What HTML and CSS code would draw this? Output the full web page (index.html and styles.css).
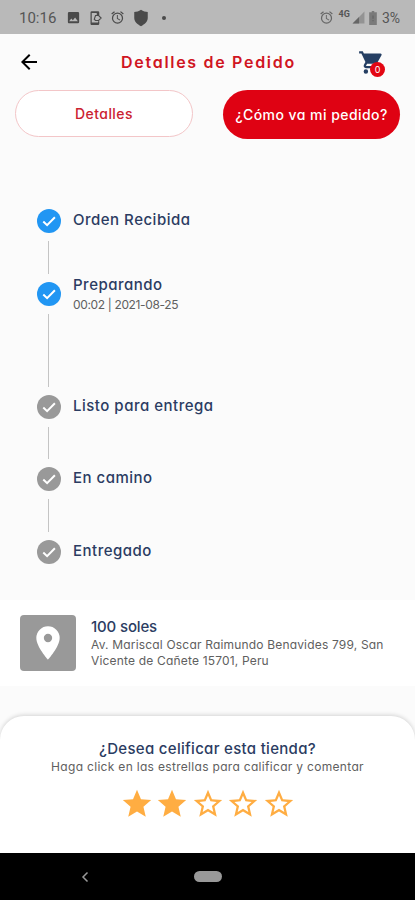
FILE: index.html
```html
<!DOCTYPE html>
<html lang="es">
<head>
  <meta charset="UTF-8" />
  <meta name="viewport" content="width=device-width, initial-scale=1.0" />
  <title>Detalles de Pedido</title>
  <link rel="stylesheet" href="styles.css">
</head>
<body>
  <svg class="sprite">
    <symbol id="alarm" viewBox="0 0 24 24">
      <path d="M22 5.7l-4.6-3.9-1.3 1.5 4.6 3.9L22 5.7zM7.9 3.4L6.6 1.9 2 5.7l1.3 1.5 4.6-3.8zM12.5 8H11v6l4.8 2.9.7-1.2-4-2.4V8zM12 4a9 9 0 1 0 0 18 9 9 0 0 0 0-18zm0 16a7 7 0 1 1 0-14 7 7 0 0 1 0 14z"/>
    </symbol>
    <symbol id="check" viewBox="0 0 24 24">
      <path d="M6.3 12.5l3.8 3.7 7.8-8" fill="none" stroke="#fff" stroke-width="2"/>
    </symbol>
    <symbol id="star" viewBox="0 0 24 24">
      <path d="M12 17.27L18.18 21l-1.64-7.03L22 9.24l-7.19-.61L12 2 9.19 8.63 2 9.24l5.46 4.73L5.82 21z"/>
    </symbol>
    <symbol id="star-outline" viewBox="0 0 24 24">
      <path d="M22 9.24l-7.19-.62L12 2 9.19 8.63 2 9.24l5.46 4.73L5.82 21 12 17.27 18.18 21l-1.63-7.03L22 9.24zM12 15.4l-3.76 2.27 1-4.28-3.32-2.88 4.38-.38L12 6.1l1.71 4.04 4.38.38-3.32 2.88 1 4.28L12 15.4z"/>
    </symbol>
  </svg>

  <div class="status-bar">
    <span class="clock">10:16</span>
    <div class="status-left">
      <svg width="15" height="15" viewBox="0 0 24 24"><path d="M21 19V5a2 2 0 0 0-2-2H5a2 2 0 0 0-2 2v14c0 1.1.9 2 2 2h14a2 2 0 0 0 2-2zM8.5 13.5l2.5 3 3.5-4.5 4.5 6H5l3.5-4.5z"/></svg>
      <svg width="15" height="16" viewBox="0 0 24 24"><path d="M18 8V3a2 2 0 0 0-2-2H6a2 2 0 0 0-2 2v18c0 1.1.9 2 2 2h10a2 2 0 0 0 2-2v-4h-2v2H6V4h8v3z"/><path d="M13 8h4l4 4-4 4h-5l-2-2 2-6z" fill="none" stroke="#4a4a4a" stroke-width="1.8"/></svg>
      <svg width="15" height="15"><use href="#alarm"/></svg>
      <svg width="18" height="18" viewBox="0 0 24 24"><path d="M12 1c3 2 6 3 9 3v8c0 5-4 8-9 11-5-3-9-6-9-11V4c3 0 6-1 9-3z"/></svg>
      <span class="dot"></span>
    </div>
    <div class="status-right">
      <svg width="15" height="15"><use href="#alarm"/></svg>
      <span class="network">4G</span>
      <svg class="signal" width="13" height="13" viewBox="0 0 24 24"><path d="M1 23L23 1v22z" opacity=".45"/><path d="M1 23L13 11v12z"/></svg>
      <svg class="battery" width="8" height="14" viewBox="0 0 12 22"><path d="M4 0h4v2h4v20H0V2h4z" opacity=".75"/><path d="M5 7h2v5H5zM5 14h2v2H5z"/></svg>
      <span class="percent">3%</span>
    </div>
  </div>

  <header class="app-bar">
    <svg class="back" width="24" height="24" viewBox="0 0 24 24"><path d="M20 11H7.83l5.59-5.59L12 4l-8 8 8 8 1.41-1.41L7.83 13H20z"/></svg>
    <h1>Detalles de Pedido</h1>
    <div class="cart">
      <svg width="27" height="27" viewBox="0 0 24 24"><path d="M7 18a2 2 0 1 0 0 4 2 2 0 0 0 0-4zM1 2v2h2l3.6 7.59-1.35 2.45C4.52 15.37 5.48 17 7 17h12v-2H7.42a.25.25 0 0 1-.22-.37L8.1 13h7.45c.75 0 1.41-.41 1.75-1.03l3.58-6.49A1 1 0 0 0 20 4H5.21l-.94-2H1zm16 16a2 2 0 1 0 0 4 2 2 0 0 0 0-4z"/></svg>
      <span class="badge">0</span>
    </div>
  </header>

  <div class="tabs">
    <button class="tab">Detalles</button>
    <button class="tab active">¿Cómo va mi pedido?</button>
  </div>

  <div class="timeline">
    <div class="step done">
      <div class="marker"><svg class="circle"><use href="#check"/></svg><span class="line"></span></div>
      <div class="step-text"><h2>Orden Recibida</h2></div>
    </div>
    <div class="step done current">
      <div class="marker"><svg class="circle"><use href="#check"/></svg><span class="line"></span></div>
      <div class="step-text"><h2>Preparando</h2><p>00:02 | 2021-08-25</p></div>
    </div>
    <div class="step">
      <div class="marker"><svg class="circle"><use href="#check"/></svg><span class="line"></span></div>
      <div class="step-text"><h2>Listo para entrega</h2></div>
    </div>
    <div class="step">
      <div class="marker"><svg class="circle"><use href="#check"/></svg><span class="line"></span></div>
      <div class="step-text"><h2>En camino</h2></div>
    </div>
    <div class="step">
      <div class="marker"><svg class="circle"><use href="#check"/></svg></div>
      <div class="step-text"><h2>Entregado</h2></div>
    </div>
  </div>

  <div class="address">
    <div class="pin">
      <svg width="40" height="40" viewBox="0 0 24 24"><path d="M12 2a7 7 0 0 0-7 7c0 5.25 7 13 7 13s7-7.75 7-13a7 7 0 0 0-7-7zm0 9.5a2.5 2.5 0 1 1 0-5 2.5 2.5 0 0 1 0 5z"/></svg>
    </div>
    <div class="address-text">
      <h2>100 soles</h2>
      <p>Av. Mariscal Oscar Raimundo Benavides 799, San<br>Vicente de Cañete 15701, Peru</p>
    </div>
  </div>

  <div class="rating">
    <h2>¿Desea celificar esta tienda?</h2>
    <p>Haga click en las estrellas para calificar y comentar</p>
    <div class="stars">
      <svg><use href="#star"/></svg>
      <svg><use href="#star"/></svg>
      <svg><use href="#star-outline"/></svg>
      <svg><use href="#star-outline"/></svg>
      <svg><use href="#star-outline"/></svg>
    </div>
  </div>

  <nav class="nav-bar">
    <svg class="nav-back" width="8" height="12" viewBox="0 0 8 12"><path d="M6.5 1.5L2 6l4.5 4.5"/></svg>
    <span class="home"></span>
  </nav>
</body>
</html>
```

FILE: styles.css
```css
* {
  box-sizing: border-box;
}

body {
  margin: 0;
  height: 900px;
  display: flex;
  flex-direction: column;
  overflow: hidden;
  background: #fbfbfb;
  font-family: Inter, "Liberation Sans", sans-serif;
  font-feature-settings: "cv11";
  color: #606060;
}

h1, h2, p {
  margin: 0;
}

h2 {
  font-size: 15px;
  line-height: 20px;
  font-weight: 500;
  letter-spacing: 0.3px;
  color: #2b3c62;
  white-space: nowrap;
}

p {
  font-size: 12px;
  line-height: 16px;
  white-space: nowrap;
}

.sprite {
  display: none;
}

/* status bar */
.status-bar {
  height: 34px;
  flex: none;
  display: flex;
  align-items: center;
  padding: 1px 15px 0 19px;
  background: #b9b9b9;
  color: #555;
  fill: #4a4a4a;
  font-family: Roboto, sans-serif;
}

.clock {
  width: 47px;
  font-size: 15px;
}

.status-left {
  display: flex;
  align-items: center;
  gap: 7px;
}

.dot {
  width: 4px;
  height: 4px;
  margin-left: 5px;
  border-radius: 50%;
  background: #4a4a4a;
}

.status-right {
  display: flex;
  align-items: center;
  margin-left: auto;
  fill: #666;
}

.network {
  margin: -7px 2px 0 5px;
  font-size: 9px;
  font-weight: bold;
}

.battery {
  margin: 0 5px 0 4px;
}

.percent {
  font-size: 14px;
}

/* app bar */
.app-bar {
  height: 56px;
  flex: none;
  display: flex;
  align-items: center;
  justify-content: space-between;
  padding: 0 30px 0 17px;
}

h1 {
  margin-left: 18px;
  font-size: 16px;
  font-weight: 600;
  letter-spacing: 1.7px;
  color: #d01522;
  white-space: nowrap;
}

.cart {
  position: relative;
  height: 27px;
  fill: #253f63;
}

.badge {
  position: absolute;
  right: 0;
  top: 13px;
  width: 15px;
  height: 15px;
  border-radius: 50%;
  background: #e30613;
  color: #fff;
  font-size: 9px;
  line-height: 15px;
  text-align: center;
}

/* tabs */
.tabs {
  height: 49px;
  flex: none;
  display: flex;
  justify-content: space-between;
  align-items: flex-start;
  padding: 0 15px;
}

.tab {
  width: 178px;
  height: 47px;
  padding: 0;
  border: 1px solid #f3c6c8;
  border-radius: 24px;
  background: #fff;
  color: #cb2230;
  font-family: inherit;
  font-feature-settings: inherit;
  font-size: 14px;
  font-weight: 500;
  letter-spacing: 0.45px;
  white-space: nowrap;
}

.tab.active {
  width: 177px;
  height: 49px;
  border: none;
  border-radius: 25px;
  background: #df0213;
  color: #fff;
}

/* timeline */
.timeline {
  height: 461px;
  flex: none;
  padding: 70px 36px 0;
}

.step {
  height: 72.7px;
  display: flex;
  gap: 12px;
}

.step.current {
  height: 113px;
}

.step-text {
  padding-top: 1px;
}

.step-text h2 {
  letter-spacing: 0.5px;
}

.marker {
  width: 25px;
  display: flex;
  flex-direction: column;
  align-items: center;
}

.circle {
  width: 24px;
  height: 24px;
  flex: none;
  border-radius: 50%;
  background: #999;
}

.done .circle {
  background: #2196f3;
}

.line {
  width: 1px;
  flex: 1;
  margin: 8px 0;
  background: #c4c4c4;
}

.current .step-text {
  margin-top: -8px;
}

.current p {
  margin-top: 2px;
  letter-spacing: -0.35px;
}

/* address */
.address {
  height: 86px;
  flex: none;
  display: flex;
  gap: 15px;
  padding: 15px 20px 0;
  background: #fff;
}

.pin {
  width: 56px;
  height: 56px;
  display: flex;
  align-items: center;
  justify-content: center;
  border-radius: 4px;
  background: #999;
  fill: #fff;
}

.address-text {
  padding-top: 2px;
}

.address-text h2 {
  letter-spacing: -0.15px;
}

.address-text p {
  letter-spacing: 0.18px;
}

/* rating sheet */
.rating {
  height: 137px;
  flex: none;
  margin-top: 30px;
  padding-top: 23px;
  border-radius: 24px 24px 0 0;
  background: #fff;
  box-shadow: 0 -1px 4px rgba(0, 0, 0, 0.16);
  text-align: center;
}

.rating p {
  letter-spacing: 0.31px;
}

.stars {
  display: flex;
  justify-content: center;
  gap: 1.5px;
  margin-top: 12px;
  fill: #ffad42;
}

.stars svg {
  width: 34px;
  height: 34px;
}

/* system navigation */
.nav-bar {
  height: 47px;
  flex: none;
  display: grid;
  grid-template-columns: 1fr 28px 1fr;
  align-items: center;
  background: #000;
}

.nav-back {
  margin-left: 81px;
  fill: none;
  stroke: #999;
  stroke-width: 1.5;
}

.home {
  height: 11px;
  border-radius: 6px;
  background: #999;
}
```
